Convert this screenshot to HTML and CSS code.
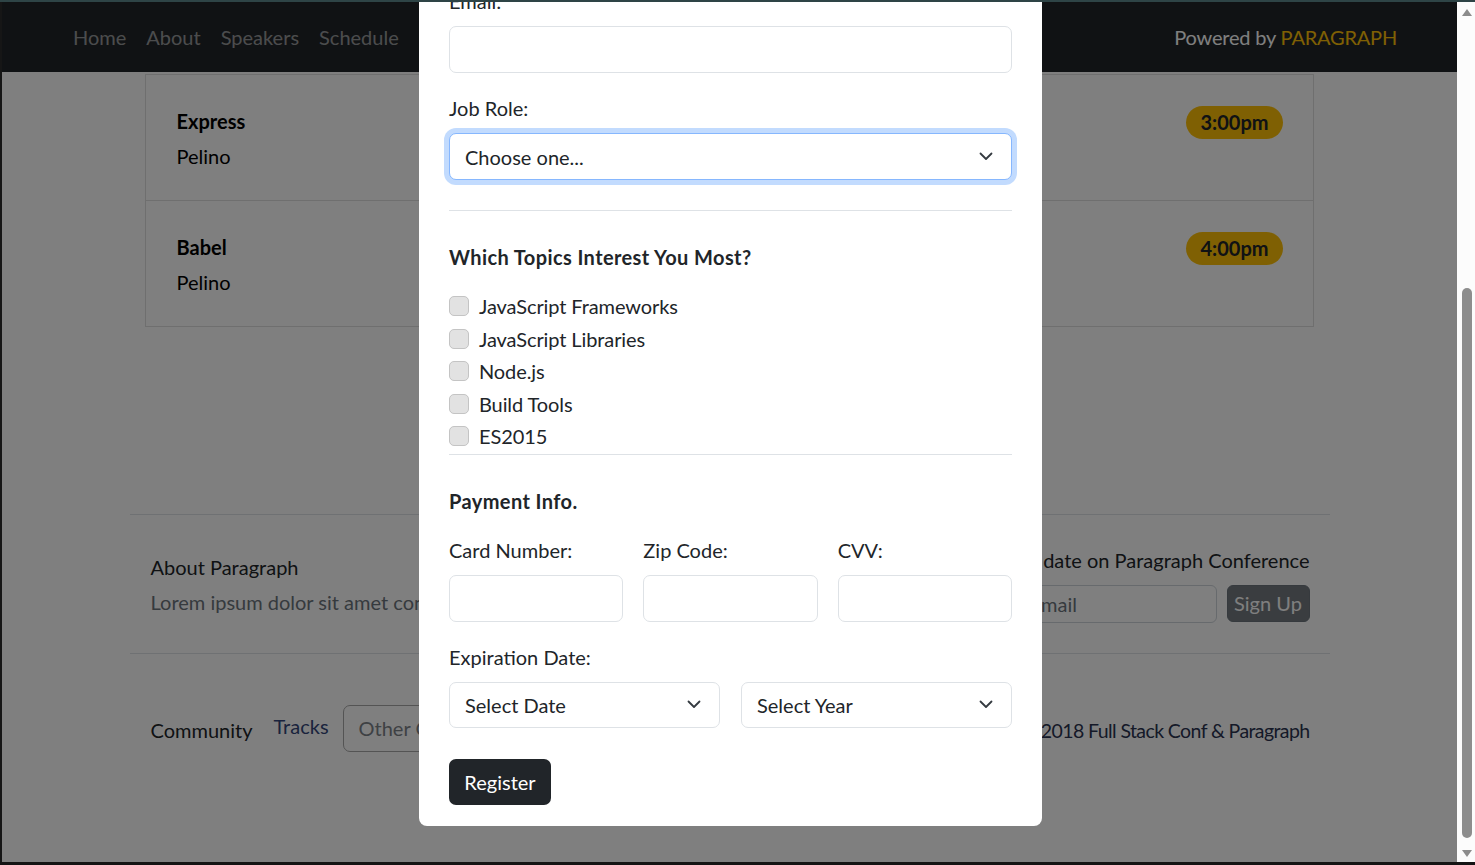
FILE: index.html
```html
<!DOCTYPE html>
<html lang="en">
<head>
<meta charset="utf-8">
<title>Full Stack Conf – Register</title>
<link rel="stylesheet" href="styles.css">
</head>
<body>
<div class="screen">
  <div class="topline"></div>
  <div class="window">
    <div class="edge"></div>
    <div class="viewport">
      <nav class="navbar">
        <ul class="nav">
          <li><a class="nav-link" href="#">Home</a></li>
          <li><a class="nav-link" href="#">About</a></li>
          <li><a class="nav-link" href="#">Speakers</a></li>
          <li><a class="nav-link" href="#">Schedule</a></li>
        </ul>
        <div class="powered">Powered by <span class="brand">PARAGRAPH</span></div>
      </nav>

      <main class="container">
        <ul class="schedule">
          <li class="session">
            <div>
              <div class="session-title">Express</div>
              <div class="session-speaker">Pelino</div>
            </div>
            <span class="badge">3:00pm</span>
          </li>
          <li class="session">
            <div>
              <div class="session-title">Babel</div>
              <div class="session-speaker">Pelino</div>
            </div>
            <span class="badge">4:00pm</span>
          </li>
        </ul>

        <footer class="footer">
          <div class="footer-row">
            <div class="about">
              <div class="about-title">About Paragraph</div>
              <div class="about-text">Lorem ipsum dolor sit amet consectetur.</div>
            </div>
            <div class="signup">
              <div class="signup-title">Stay up to date on Paragraph Conference</div>
              <div class="signup-form">
                <div class="signup-input">Enter email</div>
                <button class="btn-secondary">Sign Up</button>
              </div>
            </div>
          </div>
          <div class="footer-bottom">
            <div class="footer-links">
              <span class="link-community">Community</span>
              <span class="link-tracks">Tracks</span>
              <span class="other-box">Other Conferences</span>
            </div>
            <div class="copyright">© 2018 Full Stack Conf &amp; Paragraph</div>
          </div>
        </footer>
      </main>

      <div class="backdrop"></div>

      <div class="modal">
        <div class="field">
          <label class="label">Email:</label>
          <div class="input"></div>
        </div>
        <div class="field">
          <label class="label">Job Role:</label>
          <div class="select focus">
            <span>Choose one...</span>
            <svg class="chev" width="14" height="9" viewBox="0 0 14 9"><path d="M1.5 1.5 L7 7 L12.5 1.5" fill="none" stroke="#343a40" stroke-width="1.8" stroke-linecap="round" stroke-linejoin="round"/></svg>
          </div>
        </div>
        <hr class="rule rule-first">
        <div class="section-title">Which Topics Interest You Most?</div>
        <div class="checks">
          <div class="check"><span class="box"></span><span>JavaScript Frameworks</span></div>
          <div class="check"><span class="box"></span><span>JavaScript Libraries</span></div>
          <div class="check"><span class="box"></span><span>Node.js</span></div>
          <div class="check"><span class="box"></span><span>Build Tools</span></div>
          <div class="check"><span class="box"></span><span>ES2015</span></div>
        </div>
        <hr class="rule rule-second">
        <div class="section-title">Payment Info.</div>
        <div class="grid3 field">
          <div>
            <label class="label">Card Number:</label>
            <div class="input"></div>
          </div>
          <div>
            <label class="label">Zip Code:</label>
            <div class="input"></div>
          </div>
          <div>
            <label class="label">CVV:</label>
            <div class="input"></div>
          </div>
        </div>
        <label class="label">Expiration Date:</label>
        <div class="grid2">
          <div class="select">
            <span>Select Date</span>
            <svg class="chev" width="14" height="9" viewBox="0 0 14 9"><path d="M1.5 1.5 L7 7 L12.5 1.5" fill="none" stroke="#343a40" stroke-width="1.8" stroke-linecap="round" stroke-linejoin="round"/></svg>
          </div>
          <div class="select">
            <span>Select Year</span>
            <svg class="chev" width="14" height="9" viewBox="0 0 14 9"><path d="M1.5 1.5 L7 7 L12.5 1.5" fill="none" stroke="#343a40" stroke-width="1.8" stroke-linecap="round" stroke-linejoin="round"/></svg>
          </div>
        </div>
        <button class="btn-dark">Register</button>
      </div>
    </div>
    <div class="scrollbar">
      <div class="arrow">
        <svg width="10" height="7" viewBox="0 0 10 7"><path d="M5 0 L10 7 L0 7 Z" fill="#8c8c8c"/></svg>
      </div>
      <div class="thumb"></div>
      <div class="arrow arrow-down">
        <svg width="10" height="7" viewBox="0 0 10 7"><path d="M0 0 L10 0 L5 7 Z" fill="#8c8c8c"/></svg>
      </div>
    </div>
  </div>
  <div class="taskbar"></div>
</div>
</body>
</html>
```
FILE: styles.css
```css
* { box-sizing: border-box; }

html, body {
  margin: 0;
  padding: 0;
}

body {
  width: 1475px;
  height: 865px;
  overflow: hidden;
  background: #141414;
  font-family: Lato, "Open Sans", sans-serif;
  font-size: 20px;
  line-height: 30px;
  color: #212529;
}

.screen {
  display: flex;
  flex-direction: column;
  height: 865px;
}

.topline {
  flex: none;
  height: 2px;
  background: #2e4446;
}

.window {
  flex: none;
  display: flex;
  height: 860px;
}

.edge {
  width: 2px;
  background: #161616;
}

.viewport {
  position: relative;
  width: 1455px;
  height: 860px;
  overflow: hidden;
  background: #fff;
}

.taskbar {
  flex: none;
  height: 3px;
  background: #141414;
}

/* scrollbar */
.scrollbar {
  width: 18px;
  background: #fcfcfc;
  display: flex;
  flex-direction: column;
  align-items: center;
}

.arrow {
  height: 20px;
  display: flex;
  align-items: center;
  justify-content: center;
  padding-left: 1px;
}

.thumb {
  margin-top: 266px;
  width: 10px;
  height: 550px;
  border-radius: 5px;
  background: #8d8d8d;
  margin-left: 1px;
}

.arrow-down {
  height: 24px;
  padding-top: 6px;
}

/* navbar */
.navbar {
  height: 70px;
  background: #212529;
  display: flex;
  align-items: center;
  justify-content: space-between;
  padding: 0 60px 0 61px;
}

.nav {
  list-style: none;
  margin: 0;
  padding: 0;
  display: flex;
}

.nav-link {
  display: block;
  padding: 0 10px;
  color: rgba(255, 255, 255, 0.55);
  text-decoration: none;
}

.powered {
  color: #fff;
  letter-spacing: -0.2px;
}

.brand {
  color: #ffc107;
}

/* main */
.container {
  width: 1200px;
  margin: 0 auto;
}

.schedule {
  list-style: none;
  margin: 2px 16px 0 15px;
  padding: 0;
}

.session {
  display: flex;
  justify-content: space-between;
  align-items: flex-start;
  border: 1px solid rgba(0, 0, 0, 0.125);
  padding: 31px 30px 29px 31px;
}

.session + .session {
  border-top: 0;
}

.session-title {
  font-weight: 700;
  color: #000;
  margin-bottom: 5px;
}

.session-speaker {
  color: #000;
}

.badge {
  font-weight: 700;
  line-height: 25px;
  padding: 4px 14px;
  border-radius: 17px;
  background: #ffc107;
  color: #212529;
}

/* footer */
.footer {
  margin-top: 187px;
  border-top: 1px solid #dee2e6;
}

.footer-row {
  display: flex;
  justify-content: space-between;
  align-items: flex-start;
  padding: 0 20px 0 21px;
  height: 139px;
  border-bottom: 1px solid #dee2e6;
}

.about {
  margin-top: 37px;
}

.about-text {
  margin-top: 5px;
  color: #6c757d;
}

.signup {
  margin-top: 30px;
  display: flex;
  flex-direction: column;
  align-items: flex-end;
}

.signup-form {
  margin-top: 10px;
  display: flex;
  gap: 10px;
}

.signup-input {
  width: 254px;
  height: 38px;
  line-height: 36px;
  padding: 0 15px;
  border: 1px solid #ced4da;
  border-radius: 6px;
  background: #fff;
  color: #6c757d;
}

.btn-secondary {
  font: inherit;
  width: 83px;
  height: 37px;
  line-height: 35px;
  padding: 0;
  border: 1px solid #6c757d;
  border-radius: 6px;
  background: #747a80;
  color: #fff;
  text-align: center;
}

.footer-bottom {
  display: flex;
  justify-content: space-between;
  align-items: center;
  padding: 51px 20px 0 21px;
}

.footer-links {
  display: flex;
  align-items: center;
}

.link-community {
  color: #212529;
  margin-right: 21px;
  margin-top: 2px;
}

.link-tracks {
  color: #34477a;
  margin-right: 14px;
  margin-bottom: 6px;
}

.other-box {
  display: block;
  width: 230px;
  height: 47px;
  line-height: 45px;
  padding: 0 15px;
  border: 1px solid #a8a8a8;
  border-radius: 7px;
  color: #7c8288;
}

.copyright {
  color: #2a3350;
  margin-top: 4px;
  font-size: 19.5px;
  letter-spacing: -0.6px;
}

/* overlay */
.backdrop {
  position: absolute;
  inset: 0;
  background: rgba(0, 0, 0, 0.5);
}

.modal {
  position: absolute;
  left: 417px;
  top: -46px;
  width: 623px;
  background: #fff;
  border-radius: 8px;
  padding: 30px 30px 21px;
  color: #212529;
}

.field {
  margin-bottom: 20px;
}

.label {
  display: block;
  margin-bottom: 10px;
}

.input {
  height: 47px;
  border: 1px solid #dee2e6;
  border-radius: 7px;
  background: #fff;
}

.select {
  height: 47px;
  border: 1px solid #dee2e6;
  border-radius: 7px;
  background: #fff;
  display: flex;
  align-items: center;
  justify-content: space-between;
  padding: 0 18px 0 15px;
}

.select.focus {
  border-color: #86b7fe;
  box-shadow: 0 0 0 5px rgba(13, 110, 253, 0.25);
}

.chev {
  display: block;
}

.rule {
  border: 0;
  border-top: 1px solid #dee2e6;
  margin: 0;
}

.rule-first {
  margin: 30px 0 31px;
}

.rule-second {
  margin: 0 0 31px;
}

.section-title {
  font-weight: 700;
  letter-spacing: 0.4px;
  margin-bottom: 19px;
}

.check {
  display: flex;
  align-items: center;
  gap: 10px;
  height: 30px;
  margin-bottom: 2.5px;
  letter-spacing: -0.1px;
}

.box {
  width: 20px;
  height: 20px;
  border: 1px solid #c4c4c4;
  border-radius: 5px;
  background: #e2e2e2;
}

.grid3 {
  display: grid;
  grid-template-columns: repeat(3, 1fr);
  gap: 20px;
}

.grid2 {
  display: grid;
  grid-template-columns: 1fr 1fr;
  gap: 21px;
  margin-bottom: 31px;
}

.grid2 .select {
  height: 46px;
}

.btn-dark {
  font: inherit;
  width: 102px;
  height: 46px;
  padding: 0;
  border: 0;
  border-radius: 7px;
  background: #212529;
  color: #fff;
  text-align: center;
}
```
